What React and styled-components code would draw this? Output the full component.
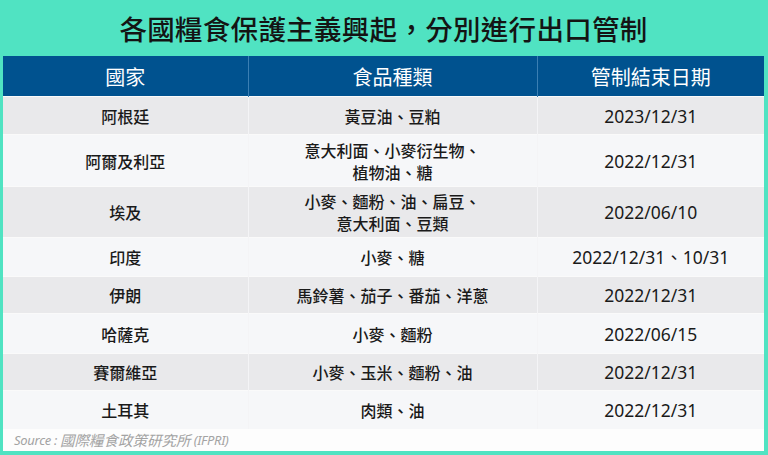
import React from 'react'
import styled, { createGlobalStyle } from 'styled-components'

const GlobalStyle = createGlobalStyle`
  html, body {
    margin: 0;
    padding: 0;
    background: #50e3c2;
  }
  body {
    font-family: "Noto Sans CJK TC", "Noto Sans", sans-serif;
  }
`

const Page = styled.div`
  width: 768px;
  height: 455px;
  background: #50e3c2;
  display: flex;
  flex-direction: column;
  padding: 0 4px 4px 3px;
  box-sizing: border-box;
`

const Title = styled.h1`
  margin: 0;
  height: 56px;
  display: flex;
  align-items: center;
  justify-content: center;
  font-size: 27.5px;
  font-weight: 500;
  color: #141414;
  letter-spacing: 0.3px;
`

const Panel = styled.div`
  flex: 1;
  background: #fdfdfd;
  display: flex;
  flex-direction: column;
`

const Table = styled.table`
  width: 100%;
  border-collapse: collapse;
  table-layout: fixed;
`

const HeadCell = styled.th`
  height: 40px;
  padding: 0;
  background: #00528f;
  color: #fff;
  font-size: 20px;
  font-weight: 400;
  text-align: center;
  border-left: 1px solid #3b7fb3;
  &:first-child { border-left: none; }
`

const Row = styled.tr`
  height: ${p => p.h}px;
  background: ${p => (p.odd ? '#e9e9eb' : '#f6f7f9')};
  border-top: 1px solid #fafafa;
`

const Cell = styled.td`
  padding: 0;
  text-align: center;
  vertical-align: middle;
  font-size: 16px;
  font-weight: 500;
  line-height: 22px;
  color: #1a1a1a;
  border-left: 1px solid #f4f4f6;
  &:first-child { border-left: none; }
`

const DateCell = styled(Cell)`
  font-family: "Noto Sans", "Noto Sans CJK TC", sans-serif;
  font-size: 17.5px;
  font-weight: 400;
`

const Source = styled.div`
  flex: 1;
  display: flex;
  align-items: center;
  padding-left: 11px;
  font-family: "Noto Sans", "Noto Sans CJK TC", sans-serif;
  font-size: 13px;
  font-style: italic;
  color: #a3a3a3;
  white-space: pre;
  letter-spacing: -0.3px;
`

const SourceName = styled.span`
  font-family: "Noto Sans CJK TC", sans-serif;
  font-size: 14.5px;
  letter-spacing: 0;
`

const rows = [
  { country: '阿根廷', food: ['黃豆油、豆粕'], date: '2023/12/31', h: 38 },
  { country: '阿爾及利亞', food: ['意大利面、小麥衍生物、', '植物油、糖'], date: '2022/12/31', h: 52 },
  { country: '埃及', food: ['小麥、麵粉、油、扁豆、', '意大利面、豆類'], date: '2022/06/10', h: 51 },
  { country: '印度', food: ['小麥、糖'], date: '2022/12/31、10/31', h: 39 },
  { country: '伊朗', food: ['馬鈴薯、茄子、番茄、洋蔥'], date: '2022/12/31', h: 37 },
  { country: '哈薩克', food: ['小麥、麵粉'], date: '2022/06/15', h: 40 },
  { country: '賽爾維亞', food: ['小麥、玉米、麵粉、油'], date: '2022/12/31', h: 37 },
  { country: '土耳其', food: ['肉類、油'], date: '2022/12/31', h: 38 },
]

export default function App() {
  return (
    <Page>
      <GlobalStyle />
      <Title>各國糧食保護主義興起，分別進行出口管制</Title>
      <Panel>
        <Table>
          <colgroup>
            <col style={{ width: 245 }} />
            <col style={{ width: 289 }} />
            <col />
          </colgroup>
          <thead>
            <tr>
              <HeadCell>國家</HeadCell>
              <HeadCell>食品種類</HeadCell>
              <HeadCell>管制結束日期</HeadCell>
            </tr>
          </thead>
          <tbody>
            {rows.map((r, i) => (
              <Row key={r.country} h={r.h} odd={i % 2 === 0}>
                <Cell>{r.country}</Cell>
                <Cell>
                  {r.food.map(line => (
                    <div key={line}>{line}</div>
                  ))}
                </Cell>
                <DateCell>{r.date}</DateCell>
              </Row>
            ))}
          </tbody>
        </Table>
        <Source>
          Source : <SourceName>國際糧食政策研究所</SourceName> (IFPRI)
        </Source>
      </Panel>
    </Page>
  )
}
